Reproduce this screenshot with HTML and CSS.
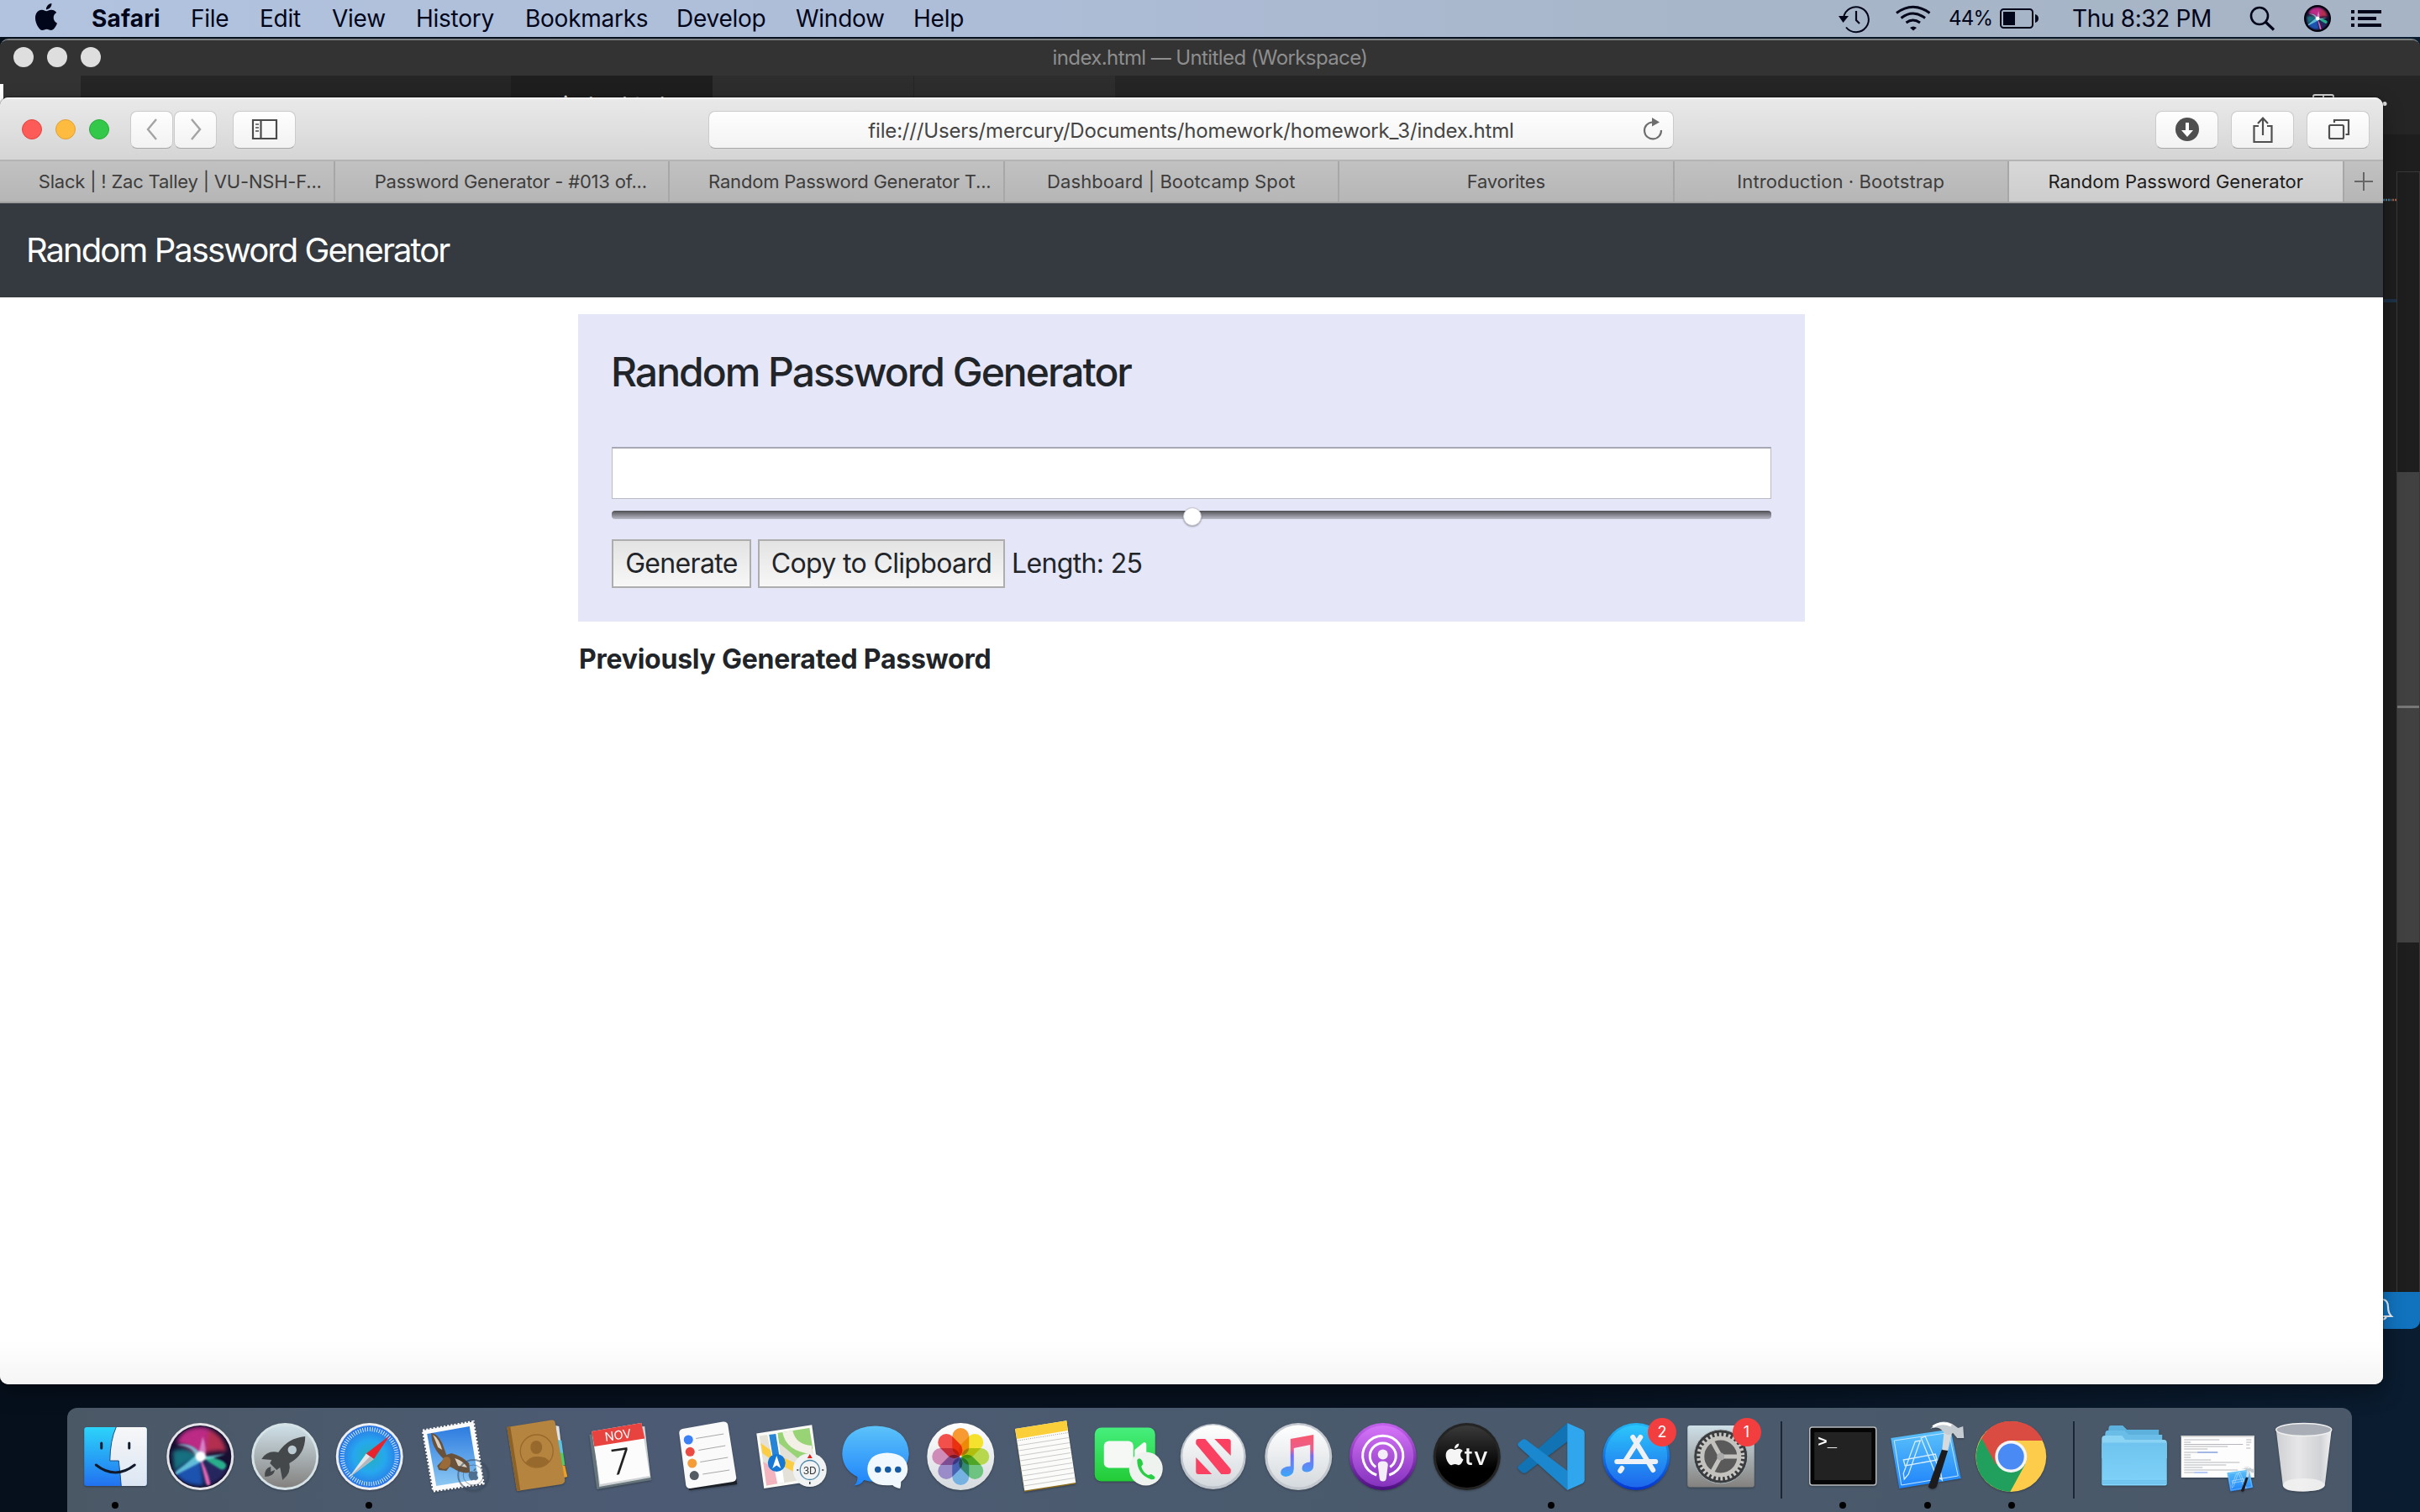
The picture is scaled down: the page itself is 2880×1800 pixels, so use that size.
FILE: index.html
```html
<!DOCTYPE html>
<html lang="en">
<head>
<meta charset="utf-8">
<title>Random Password Generator</title>
<link rel="stylesheet" href="styles.css">
</head>
<body>
<svg class="defs" width="0" height="0">
  <defs>
    <path id="apple" d="M12.152 6.896c-.948 0-2.415-1.078-3.96-1.04-2.04.027-3.91 1.183-4.961 3.014-2.117 3.675-.546 9.103 1.519 12.09 1.013 1.454 2.208 3.09 3.792 3.039 1.52-.065 2.09-.987 3.935-.987 1.831 0 2.35.987 3.96.948 1.637-.026 2.676-1.48 3.676-2.948 1.156-1.688 1.636-3.325 1.662-3.415-.039-.013-3.182-1.221-3.22-4.857-.026-3.04 2.48-4.494 2.597-4.559-1.429-2.09-3.623-2.324-4.39-2.376-2-.156-3.675 1.09-4.61 1.09zM15.53 3.83c.843-1.012 1.4-2.427 1.245-3.83-1.207.052-2.662.805-3.532 1.818-.78.896-1.454 2.338-1.273 3.714 1.338.104 2.715-.688 3.559-1.701"/>
    <linearGradient id="gWhite" x2="0" y2="1"><stop stop-color="#fff"/><stop offset="1" stop-color="#d5dade"/></linearGradient>
    <linearGradient id="gBlue" x2="0" y2="1"><stop stop-color="#5cc3fa"/><stop offset="1" stop-color="#1e83fa"/></linearGradient>
    <linearGradient id="gFinder" x2="0" y2="1"><stop stop-color="#2cd4fa"/><stop offset="1" stop-color="#2272f0"/></linearGradient>
    <linearGradient id="gFinderR" x2="0" y2="1"><stop stop-color="#f7f7f8"/><stop offset="1" stop-color="#dbe6f3"/></linearGradient>
    <linearGradient id="gSteel" x2="0" y2="1"><stop stop-color="#cfe0e8"/><stop offset="1" stop-color="#83817f"/></linearGradient>
    <radialGradient id="gSafari"><stop stop-color="#24b0b8"/><stop offset=".5" stop-color="#26a8ee"/><stop offset="1" stop-color="#2a73e6"/></radialGradient>
    <linearGradient id="gSky" x2="0" y2="1"><stop stop-color="#2c7be0"/><stop offset="1" stop-color="#8cc8f2"/></linearGradient>
    <linearGradient id="gGreen" x2="0" y2="1"><stop stop-color="#45ef7c"/><stop offset="1" stop-color="#22cb36"/></linearGradient>
    <linearGradient id="gPurple" x2="0" y2="1"><stop stop-color="#d574f8"/><stop offset="1" stop-color="#8432bd"/></linearGradient>
    <linearGradient id="gPurpleD" x2="0" y2="1"><stop stop-color="#c562ee"/><stop offset="1" stop-color="#4c1080"/></linearGradient>
    <linearGradient id="gBlack" x2="0" y2="1"><stop stop-color="#3a3a3a"/><stop offset=".7" stop-color="#000"/></linearGradient>
    <linearGradient id="gStore" x2="0" y2="1"><stop stop-color="#2bc6fb"/><stop offset="1" stop-color="#1e67ec"/></linearGradient>
    <linearGradient id="gStoreD" x2="0" y2="1"><stop stop-color="#22b5f5"/><stop offset="1" stop-color="#0734cc"/></linearGradient>
    <linearGradient id="gMusic" x2="0" y2="1"><stop stop-color="#f9586b"/><stop offset=".35" stop-color="#ea5f8f"/><stop offset=".5" stop-color="#7a6bf5"/><stop offset="1" stop-color="#3aa9f8"/></linearGradient>
    <linearGradient id="gFolder" x2="0" y2="1"><stop stop-color="#6ec4ee"/><stop offset="1" stop-color="#80d3fa"/></linearGradient>
    <linearGradient id="gTrash"><stop stop-color="#cfd0d3"/><stop offset=".4" stop-color="#e6e6e8"/><stop offset=".8" stop-color="#d2d3d6"/><stop offset="1" stop-color="#f1f1f2"/></linearGradient>
    <filter id="soft" x="-20%" y="-20%" width="140%" height="140%"><feGaussianBlur stdDeviation="2.500"/></filter>
    <filter id="soft1" x="-20%" y="-20%" width="140%" height="140%"><feGaussianBlur stdDeviation=".8"/></filter>
    <clipPath id="siriClip"><circle cx="50" cy="58" r="36"/></clipPath>
    <g id="siri">
      <circle cx="50" cy="58" r="37" fill="#150f30"/>
      <g clip-path="url(#siriClip)">
        <g filter="url(#soft)">
          <path d="M22 42Q28 22 54 23Q76 28 80 52Q66 46 50 58Q38 44 22 42z" fill="#bb2c85"/>
          <path d="M60 26Q78 32 81 52Q68 50 56 54z" fill="#b32e50"/>
          <path d="M17 52Q32 44 50 58Q30 66 19 76z" fill="#14707f"/>
          <path d="M20 78Q32 66 50 58L54 92Q32 94 20 78z" fill="#1a53b0"/>
          <path d="M52 60Q78 62 82 72Q76 88 58 92z" fill="#25285e"/>
        </g>
        <g filter="url(#soft1)">
          <path d="M50 57Q78 60 81 68Q80 75 74 73Q62 66 50 57z" fill="#2cc795" opacity=".85"/>
          <path d="M49 58Q58 72 62 90Q60 96 57 90Q53 74 49 58z" fill="#e666b4"/>
          <path d="M22 44Q42 40 53 58L80 55Q62 62 54 61L50 65L21 80Q19 78 22 75Q38 63 44 57Q42 46 22 44z" fill="#7deaf0" opacity=".7"/>
          <path d="M53 34Q50 48 46 60L56 62Q58 48 53 34z" fill="#dfa0dc" opacity=".75"/>
          <circle cx="50.500" cy="58" r="6" fill="#fff"/>
        </g>
      </g>
    </g>
    <g id="xcode">
      <path d="M6 36L77 25.500L89.500 84L16 96z" fill="url(#gBlue)"/>
      <path d="M10 39L75 29.500L86 81L18.500 92z" fill="none" stroke="#c5e6fd" stroke-width="1"/>
      <path d="M42 36l5-2 18 42 2 10-8-8zM35 40l6-1-14 40-5 6-1-7zM21 62l38-7 2 7-38 7z" fill="none" stroke="#d9effd" stroke-width="1.300"/>
      <path d="M67 49l7 1.500L60.500 94q-5 5-10 0z" fill="#1c1c1f"/>
      <path d="M70 22l10 1-6 28-7-1z" fill="#d4dade"/>
      <path d="M53 25Q64 12 79 19L86 24L92 22L93 36L85 36L80 30Q74 35 68 28Q62 21 53 25z" fill="#c4cbd1"/>
      <path d="M56 22.500Q66 16 78 21" stroke="#fff" stroke-width="3" fill="none"/>
    </g>
  </defs>
</svg>

<div class="desktop">
  <header class="menubar">
    <svg class="mb-apple" viewBox="0 0 24 24"><use href="#apple"/></svg>
    <nav class="menus">
      <b>Safari</b><span>File</span><span>Edit</span><span>View</span><span>History</span><span>Bookmarks</span><span>Develop</span><span>Window</span><span>Help</span>
    </nav>
    <svg class="mb-icons" viewBox="2180 0 140 44" width="140" height="44">
      <g fill="none" stroke="#02061a" stroke-width="2">
        <path d="M2194 21A15 15 0 1 1 2197 32.500"/>
        <path d="M2209 13V24L2213 28" stroke-width="2.200"/>
        <path d="M2257 15.500Q2276.500 1 2296.500 15.500M2262.500 21.500Q2276.500 10.500 2291 21.500M2268.500 27Q2276.500 21 2285 27" stroke-width="3"/>
      </g>
      <path d="M2188 19h12l-6.500 8zM2273 33q4-3 8 0l-4 3.500z" fill="#02061a"/>
    </svg>
    <span class="pct">44%</span>
    <svg class="mb-bat" viewBox="2378 0 60 44" width="60" height="44">
      <rect x="2381" y="11" width="38" height="22" rx="3.500" fill="none" stroke="#02061a" stroke-width="2"/>
      <path d="M2384 14h14v16h-14zM2422 17q4 1 4 5t-4 5z" fill="#02061a"/>
    </svg>
    <span class="clock">Thu 8:32 PM</span>
    <svg class="mb-right" viewBox="2670 0 210 44" width="210" height="44">
      <circle cx="2689" cy="19" r="10" fill="none" stroke="#02061a" stroke-width="2.600"/>
      <path d="M2696 26l10 9.500" stroke="#02061a" stroke-width="3.200"/>
      <circle cx="2758" cy="22" r="16" fill="#04030d"/>
      <g transform="translate(2739 0) scale(.38)"><use href="#siri"/></g>
      <path d="M2798 12h4v4h-4zM2806 12h28v4h-28zM2798 20h4v4h-4zM2806 20h22v4h-22zM2798 28h4v4h-4zM2806 28h28v4h-28z" fill="#02061a"/>
    </svg>
  </header>

  <section class="editor">
    <div class="editor-title">
      <div class="lights grey"><i></i><i></i><i></i></div>
      <span>index.html — Untitled (Workspace)</span>
    </div>
    <div class="editor-tabs"><i class="side"></i><i class="bar"></i><div class="on">index.html</div><i class="off"></i><i class="off"></i></div>
    <div class="editor-body">
      <i class="hl"></i>
      <div class="map"><i class="thumb"><i></i></i></div>
    </div>
    <div class="status">
      <svg width="30" height="44" viewBox="0 0 30 44"><path d="M-6 29H10Q6 25 6 18Q6 10 0 9M-4 31Q0 35 4 30" fill="none" stroke="#e8f1f8" stroke-width="2.200"/></svg>
    </div>
    <svg class="editor-bits" viewBox="2700 100 180 160" width="180" height="160">
      <path d="M2753 120v-5q0-2 2-2h20q2 0 2 2v5M2765 113v6" fill="none" stroke="#d0d0d0" stroke-width="2"/>
      <circle cx="2838" cy="123.500" r="2.500" fill="#e0e0e0"/>
      <path d="M2836 238h10" stroke="#4f7f96" stroke-width="2.500" stroke-dasharray="2 1"/>
      <path d="M2847 238h5" stroke="#a0604e" stroke-width="2.500" stroke-dasharray="2 1"/>
    </svg>
  </section>

  <section class="browser">
    <div class="toolbar">
      <div class="lights"><i class="r"></i><i class="y"></i><i class="g"></i></div>
      <div class="btn nav"><svg width="24" height="30" viewBox="0 0 24 30"><path d="M17 3L7 15L17 27" fill="none" stroke="#a3a3a3" stroke-width="2.400"/></svg></div>
      <div class="btn nav"><svg width="24" height="30" viewBox="0 0 24 30"><path d="M7 3L17 15L7 27" fill="none" stroke="#a3a3a3" stroke-width="2.400"/></svg></div>
      <div class="btn sidebar"><svg width="32" height="26" viewBox="0 0 32 26"><path d="M2 2h28v22h-28zM11.500 2v22" fill="none" stroke="#4a4a4a" stroke-width="2.200"/><path d="M5 7h4M5 11h4M5 15h4" stroke="#777" stroke-width="2"/></svg></div>
      <div class="url"><span>file:///Users/mercury/Documents/homework/homework_3/index.html</span>
        <svg width="28" height="30" viewBox="0 0 28 30"><path d="M13 6.500A10 10 0 1 0 24 16" fill="none" stroke="#6e6e6e" stroke-width="2.200"/><path d="M13 1l9 5.500-9 5z" fill="#6e6e6e"/></svg>
      </div>
      <div class="tools">
        <div class="btn"><svg width="30" height="30" viewBox="0 0 30 30"><circle cx="15" cy="15" r="14" fill="#4f4f4f"/><path d="M13 7h4v9h5l-7 8-7-8h5z" fill="#fff"/></svg></div>
        <div class="btn"><svg width="30" height="36" viewBox="0 0 30 36"><path d="M10 14H4.500V33H25.500V14H20M15 25V5M9 11L15 4.500L21 11" fill="none" stroke="#4f4f4f" stroke-width="2.200"/></svg></div>
        <div class="btn"><svg width="30" height="30" viewBox="0 0 30 30"><rect x="4" y="10" width="17" height="16" rx="1.500" fill="none" stroke="#4f4f4f" stroke-width="2.200"/><path d="M10 7V4H27V21H23.500" fill="none" stroke="#4f4f4f" stroke-width="2.200"/></svg></div>
      </div>
    </div>
    <div class="tabs">
      <div class="tab icon">Slack | ! Zac Talley | VU-NSH-F...</div>
      <div class="tab second">Password Generator - #013 of...</div>
      <div class="tab icon">Random Password Generator T...</div>
      <div class="tab wide">Dashboard | Bootcamp Spot</div>
      <div class="tab">Favorites</div>
      <div class="tab wide">Introduction · Bootstrap</div>
      <div class="tab active">Random Password Generator</div>
      <div class="plus"><svg width="24" height="24" viewBox="0 0 24 24"><path d="M1 12h22M12 1v22" stroke="#666" stroke-width="2"/></svg></div>
    </div>
    <div class="navbar">Random Password Generator</div>
    <main class="page">
      <div class="panel">
        <h2>Random Password Generator</h2>
        <div class="field"></div>
        <div class="slider"><i></i></div>
        <div class="actions">
          <span class="act gen">Generate</span><span class="act copy">Copy to Clipboard</span><span class="len">Length: 25</span>
        </div>
      </div>
      <div class="prev">Previously Generated Password</div>
    </main>
  </section>

  <footer class="dock">
    <div class="app run"><svg viewBox="0 0 100 124"><rect x="13" y="23" width="74.500" height="70" rx="3" fill="url(#gFinder)"/><path d="M51 23H84.500q3 0 3 3V90q0 3-3 3H57Q56 80 54 63H43.500Q44 38 51 23z" fill="url(#gFinderR)"/><path d="M51 23Q44 38 43.500 63H54Q56 80 57 93" fill="none" stroke="#1e4f80" stroke-width="1"/><path d="M33.500 42v6M66.500 42v6M27 68Q50 86 73 68" fill="none" stroke="#101a2a" stroke-width="3" stroke-linecap="round"/></svg></div>
    <div class="app"><svg viewBox="0 0 100 124"><circle cx="50" cy="58" r="40" fill="#e4e4e8"/><use href="#siri"/></svg></div>
    <div class="app"><svg viewBox="0 0 100 124"><circle cx="51" cy="58" r="40" fill="#d5e2e6"/><circle cx="51" cy="58" r="37" fill="url(#gSteel)"/><path d="M75 34Q54 36 43 53Q30 50 23 61L35 62L33 66L41 74L45 71L48 86Q59 77 56 66Q75 56 75 34z" fill="#45484b"/><path d="M34 70Q26 72 27 82Q37 82 39 74L34 76z" fill="#45484b"/><circle cx="59.500" cy="50" r="5.200" fill="#bccbd1"/></svg></div>
    <div class="app run"><svg viewBox="0 0 100 124"><circle cx="50.500" cy="58" r="40" fill="#eceef0"/><circle cx="50.500" cy="58" r="37" fill="url(#gSafari)"/><circle cx="50.500" cy="58" r="32.500" fill="none" stroke="#e6f4fb" stroke-width="5" stroke-dasharray=".9 1.935"/><path d="M74.500 33L46.500 54.500L55.500 61z" fill="#e8232c"/><path d="M46.500 54.500L26 83L55.500 61z" fill="#e3e6e8"/><path d="M51 58L26 83L55.500 61z" fill="#b3b8bd"/></svg></div>
    <div class="app"><svg viewBox="0 0 100 124"><path d="M14 27L74 16.500L86 90L26.500 99z" fill="#fbfbfb" stroke="#fbfbfb" stroke-width="3" stroke-dasharray="2.200 2"/><path d="M19 31L69.500 22L80 85L30 93z" fill="url(#gSky)"/><path d="M24 30Q31 30 37 42L42 56L48 54Q60 57 69 66L70 77Q60 79 50 72L46 70L42 75L33 74L31 69L39 61Q24 48 24 30z" fill="#6a523a"/><path d="M26 32Q33 36 37 50L32 47zM52 60Q62 63 67 71L56 69z" fill="#d9cfc0"/><path d="M39 59q8-3 8 5t-8 9l-6-2z" fill="#9a6b38"/><circle cx="74" cy="80" r="18" fill="none" stroke="#3d5068" stroke-width="2" opacity=".6"/><circle cx="74" cy="80" r="12" fill="none" stroke="#3d5068" stroke-width="1" opacity=".5"/><g transform="translate(67 72) scale(.6)" fill="#3d5068" opacity=".7"><use href="#apple"/></g></svg></div>
    <div class="app"><svg viewBox="0 0 100 124"><path d="M71 21l4 1 2 17-5 2z" fill="#dfe3e6"/><path d="M73 38l5 1 2 15-6 2z" fill="#5bc3e4"/><path d="M75 53l5 1 2 14-6 2z" fill="#4fce62"/><path d="M77 68l5 1 3 13-7 2z" fill="#f09f20"/><path d="M13 23L66 14.500Q70 14 70.500 18L82 86Q82 90 78 91L25 99z" fill="#b5843f"/><path d="M13 23L17 22L29 98L25 99z" fill="#8d6228"/><circle cx="48.500" cy="51.500" r="19.500" fill="#b5843f" stroke="#98692c" stroke-width="1.300"/><ellipse cx="48" cy="47" rx="7" ry="8" fill="#98692c"/><path d="M35 66Q40 57 50 58Q60 58 64 64Q52 76 35 66z" fill="#98692c"/></svg></div>
    <div class="app"><svg viewBox="0 0 100 124"><path d="M11 32L75 21L85 86L20 97z" fill="#66747c"/><path d="M16 29L77 22L84 83L23 94z" fill="#cfd3d6"/><path d="M14 28L73 18L83 81L24 91z" fill="#fcfcfc"/><path d="M14 28L73 18L77 36.500L17 46z" fill="#e8433f"/><g transform="rotate(-8 46 32)"><text x="45" y="37.500" font-size="14.500" fill="#fff" text-anchor="middle" font-family="Inter">NOV</text></g><g transform="rotate(-8 50 62)"><text x="48.500" y="78.500" font-size="42" font-weight="300" fill="#222" text-anchor="middle" font-family="Inter">7</text></g></svg></div>
    <div class="app"><svg viewBox="0 0 100 124"><path d="M19 30L74 20L86 91L29 98z" fill="#1c2127"/><path d="M17 30Q17 26 21 25L69 16.500Q74 16 75 20L85 83Q85 87 81 88L30 96Q26 96 25 92z" fill="#fafafa"/><path d="M37 36.500L70 31M40 50.500L72 45M42 64.500L75 59M45 79L77 74" stroke="#a8a8a8" stroke-width="1"/><circle cx="28" cy="38" r="5.500" fill="#3b80f6"/><circle cx="30" cy="52.300" r="5.500" fill="#ea4a41"/><circle cx="32.500" cy="66" r="5.500" fill="#f39c38"/><circle cx="35" cy="80.600" r="5.500" fill="#545b62"/></svg></div>
    <div class="app"><svg viewBox="0 0 100 124"><path d="M9 30.600L75 20.300L84 86L18 96z" fill="#fafaf7"/><path d="M12.500 33.500L72 24L80.500 83L21 92.500z" fill="#e4e1d8"/><path d="M34 30L72 24L76 48Q70 58 58 60L36 42z" fill="#98d475"/><path d="M40 29Q44 52 75 55L75 45Q56 44 52 27z" fill="#f3f0e8"/><path d="M14 42L34 56L60 68L57 78L30 64L16 54z" fill="#fbcd45"/><path d="M17 64L30 72L34 90L21 92.500z" fill="#f3b3bf"/><path d="M22 32L34 30L42 89L34 90z" fill="#fff"/><path d="M24 32L32 31L36 56L28 56z" fill="#2785d6"/><circle cx="33" cy="65.500" r="10.500" fill="#1478d4"/><path d="M33 57l5 15-5-3.500-5 3.500z" fill="#fff"/><circle cx="72.500" cy="74" r="20" fill="#f0f2f3"/><circle cx="72.500" cy="74" r="11.500" fill="none" stroke="#4b87a5" stroke-width="1.300"/><path d="M72.500 55l3 5h-6z" fill="#e32119"/><path d="M57 74h2M87 74h2M72.500 88v3" stroke="#333" stroke-width="1.500"/><text x="72.500" y="78.500" font-size="12" fill="#333" text-anchor="middle" font-family="Inter">3D</text></svg></div>
    <div class="app"><svg viewBox="0 0 100 124"><path d="M10 55Q11 23 49.500 21.600Q88 23 89.500 55Q87 86 49.500 88Q42 88 36 86Q32 92 24 92.500Q29 88 28 82Q11 74 10 55z" fill="url(#gBlue)"/><path d="M40 73Q41 54 63.500 53.500Q87 54 88 73Q88 82 80 88Q80 93 79 96Q73 95 70 92Q41 95 40 73z" fill="#f1f8fe"/><g fill="#165ba6"><circle cx="52.500" cy="73.500" r="3.800"/><circle cx="64.500" cy="73.500" r="3.800"/><circle cx="76.500" cy="73.500" r="3.800"/></g></svg></div>
    <div class="app"><svg viewBox="0 0 100 124"><circle cx="51" cy="58" r="40" fill="url(#gWhite)"/><g class="petals" transform="translate(51 58)"><rect x="-10" y="-34" width="20" height="33" rx="10" fill="#f79a31"/><rect x="-10" y="-34" width="20" height="33" rx="10" fill="#f5e22e" transform="rotate(45)"/><rect x="-10" y="-34" width="20" height="33" rx="10" fill="#b7d84d" transform="rotate(90)"/><rect x="-10" y="-34" width="20" height="33" rx="10" fill="#6ec380" transform="rotate(135)"/><rect x="-10" y="-34" width="20" height="33" rx="10" fill="#75b2e2" transform="rotate(180)"/><rect x="-10" y="-34" width="20" height="33" rx="10" fill="#9a8cc9" transform="rotate(225)"/><rect x="-10" y="-34" width="20" height="33" rx="10" fill="#cf8cb9" transform="rotate(270)"/><rect x="-10" y="-34" width="20" height="33" rx="10" fill="#f2514b" transform="rotate(315)"/></g></svg></div>
    <div class="app"><svg viewBox="0 0 100 124"><path d="M15 27L76 17L87 90.500L26 100z" fill="#8c6b1c"/><path d="M14.800 25L76 15.300L87 89L26 98.500z" fill="#fbfbfa"/><path d="M14.800 25L76 15.300L77.500 27L17 37z" fill="#fbcf3a"/><path d="M18 39L78 29.500" stroke="#999" stroke-dasharray="1 1.500"/><path d="M18 45L78.500 35.500M19 51L79.500 41.500M20 57L80.500 47.500M21 63L81 53.500M21.500 69L82 59.500M22.500 75L83 65.500M23.500 81L84 71.500M24 87L84.500 77.500M25 93L85.500 83.500" stroke="#cacaca" stroke-width="1"/></svg></div>
    <div class="app"><svg viewBox="0 0 100 124"><rect x="9.500" y="23.500" width="72" height="64" rx="8" fill="url(#gGreen)"/><rect x="20.500" y="39.500" width="35" height="32" rx="6" fill="#f6f8f6"/><path d="M57 50L68 41Q71 41 71 44V70L57 60z" fill="#f6f8f6"/><circle cx="70.500" cy="72.500" r="20" fill="#eff3ef"/><path d="M60 62Q63 58 66 63L67 67L65 70Q67 77 73 80L77 79L81 82Q82 86 76 85Q60 79 60 62z" fill="#28cf45"/></svg></div>
    <div class="app"><svg viewBox="0 0 100 124"><circle cx="49.500" cy="58" r="39" fill="#bcc3cb"/><circle cx="49.500" cy="57" r="36.500" fill="url(#gWhite)"/><path d="M29 40Q29 37 32 37H40L70.500 73V76Q70.500 79 67 79H59L29 43zM51 37H67Q70.500 37 70.500 40V57zM29 59L48 79H32Q29 79 29 76z" fill="#fb4161"/></svg></div>
    <div class="app"><svg viewBox="0 0 100 124"><circle cx="51" cy="58" r="40" fill="#c3c8cf"/><circle cx="51" cy="57.500" r="37" fill="url(#gWhite)"/><path d="M41.500 37L69 32V68Q69 76 61 76.500Q54 76 55.500 70Q57 65 65 64.500V44L45.500 48V73Q45 81 36 82Q29 81 30 76Q31 70 41.500 69.500z" fill="url(#gMusic)"/></svg></div>
    <div class="app"><svg viewBox="0 0 100 124"><circle cx="50.500" cy="58" r="40" fill="url(#gPurpleD)"/><circle cx="50.500" cy="57.500" r="36.500" fill="url(#gPurple)"/><g fill="none" stroke="#fff" stroke-width="3"><path d="M43 80A24 24 0 1 1 58 80"/><path d="M42 70.500A15.500 15.500 0 1 1 59 70.500"/></g><circle cx="50.500" cy="55.500" r="6" fill="#f4eef8"/><path d="M44.500 68Q44.500 63.500 50.500 63.500T56.500 68L54.500 84Q54 87.500 50.500 87.500T46.500 84z" fill="#f4eef8"/></svg></div>
    <div class="app"><svg viewBox="0 0 100 124"><circle cx="50.500" cy="58" r="40" fill="#242424"/><circle cx="50.500" cy="58" r="37" fill="url(#gBlack)"/><g transform="translate(23 42.500) scale(1.070)" fill="#f5f5f5"><use href="#apple"/></g><text x="47.500" y="68" font-size="29" font-weight="500" fill="#f5f5f5" textLength="28" font-family="Inter">tv</text></svg></div>
    <div class="app run"><svg viewBox="0 0 100 124"><path d="M69 18V40L20 77Q17 79 14 76L10.500 73Q9 71 11 69z" fill="#1173b4"/><path d="M69 98V75L20 38Q17 36 14 39L10.500 42Q9 44 11 46z" fill="#1a87cf"/><path d="M69 18L87 26Q89.500 27.500 89.500 30V86Q89.500 88.500 87 90L69 98z" fill="#2fa6ee"/></svg></div>
    <div class="app"><svg viewBox="0 0 100 124"><circle cx="51" cy="58" r="40" fill="url(#gStoreD)"/><circle cx="51" cy="57.500" r="37" fill="url(#gStore)"/><g stroke="#eef1f6" stroke-width="6" stroke-linecap="round"><path d="M28 64H74M56 35L38 63M47 35L71 74M34 72L32 75"/></g></svg><span class="badge">2</span></div>
    <div class="app"><svg viewBox="0 0 100 124"><rect x="11" y="21" width="79.500" height="73.500" rx="3" fill="url(#gSteel)"/><circle cx="50.500" cy="58" r="32" fill="#3a3c3e" stroke="#a8b4ba"/><circle cx="50.500" cy="58" r="26" fill="none" stroke="#c8c8c6" stroke-width="5" stroke-dasharray="2.800 2.645"/><circle cx="50.500" cy="58" r="22" fill="#5a5a5a" stroke="#c4c2be" stroke-width="5"/><path d="M50.500 58H72M50.500 58L40 39M50.500 58L40 77" stroke="#c4c2be" stroke-width="5"/><circle cx="50.500" cy="58" r="4.500" fill="#aaa"/></svg><span class="badge">1</span></div>
    <div class="sep"></div>
    <div class="app run"><svg viewBox="0 0 100 124"><rect x="10.500" y="23" width="79" height="69" rx="3" fill="#050505" stroke="#b9bcbe" stroke-width="1.500"/><rect x="16" y="29" width="68" height="57" fill="#222"/><text x="20" y="46" font-size="19" font-weight="700" fill="#fff" font-family="Liberation Mono">&gt;_</text></svg></div>
    <div class="app run"><svg viewBox="0 0 100 124"><use href="#xcode"/></svg></div>
    <div class="app run"><svg viewBox="0 0 100 124"><circle cx="49" cy="58" r="42" fill="#fccc4a"/><path d="M49 58L49 39H87Q76 16 49 16Q26 16 14 37L31 68z" fill="#da4c41"/><path d="M14 36Q2 56 12 78Q24 98 48 100L66 67L31 67z" fill="#21a05d"/><path d="M49 16Q26 16 14 36L31 67L49 58z" fill="#da4c41"/><circle cx="49" cy="58" r="19" fill="#f4f4f4"/><circle cx="49" cy="58" r="15.500" fill="#4a8af5"/></svg></div>
    <div class="sep"></div>
    <div class="app"><svg viewBox="0 0 100 124"><path d="M18 26Q18 21 21 21H35L40 26H78V60H18z" fill="#5cb2dd"/><path d="M14 32Q14 27 17 27H37L42 32H82V60H14z" fill="#69bde6"/><path d="M10 37Q10 33 14 33H34L38 38H84Q87.500 38 87.500 42V60H10z" fill="#8bd3f5"/><rect x="10" y="41.500" width="77.500" height="51" rx="2" fill="url(#gFolder)"/><path d="M10 87H87.500M10 89.500H87.500" stroke="#5fb4e0" stroke-width="1"/></svg></div>
    <div class="app"><svg viewBox="0 0 100 124"><rect x="4.500" y="33" width="87" height="50" fill="#fdfdfd"/><path d="M4.500 34H91" stroke="#d5d5d5" stroke-width="2"/><path d="M8 38H50M8 41H16M8 43.500H78M8 46H60M8 49H36M8 53H48M8 56H16M8 59H16M8 62H40M8 65H74M8 68H58M8 71H30M8 74H72M8 77H20M82 38H88M82 41H88M82 44H86M82 48H87" stroke="#b5b7ba" stroke-width="1"/><path d="M24 53H48M20 77H36" stroke="#6f95ee" stroke-width="1"/><g transform="translate(57 64) scale(.37)"><use href="#xcode"/></g></svg></div>
    <div class="app"><svg viewBox="0 0 100 124"><path d="M16.500 26L24.500 92Q26 99 49 99.500Q73 99 74.500 92L82.500 26z" fill="url(#gTrash)"/><path d="M24.500 92Q26 84 49 84T74.500 92Q73 99 49 99.500T24.500 92z" fill="#f3f3f3" opacity=".8"/><ellipse cx="49.500" cy="26" rx="33" ry="7.500" fill="#a9aeb6" stroke="#f0f0f0" stroke-width="1.500"/></svg></div>
  </footer>
</div>
</body>
</html>
```
FILE: styles.css
```css
* { box-sizing: border-box; }
body { margin: 0; font-family: Inter, "Liberation Sans", sans-serif; }
.defs { position: absolute; }
i { display: block; font-style: normal; }
svg { display: block; flex: none; }

.desktop {
  position: relative; width: 2880px; height: 1800px; overflow: hidden;
  background: linear-gradient(90deg, #06101d, #07111f 60%, #0a1c30);
}

/* menu bar */
.menubar {
  position: relative; display: flex; align-items: center; height: 44px;
  font-size: 28px; line-height: 44px; color: #02061a; letter-spacing: -.25px; white-space: nowrap;
  background: linear-gradient(90deg, #b2c3df, #adbdd7 42%, #a8b6c9 70%, #a6b4c6);
}
.mb-apple { width: 32px; height: 32px; margin: -4px 0 0 39px; fill: #02061a; }
.menus { display: grid; grid-template-columns: 118px 82px 86px 100px 130px 180px 142px 140px 70px; margin-left: 38px; }
.menus b { letter-spacing: .2px; }
.mb-icons { margin-left: 1023px; }
.pct { width: 58px; font-size: 24px; letter-spacing: -.7px; margin-left: -1px; line-height: 44px; }
.mb-bat { margin-left: 1px; }
.clock { width: 204px; margin-left: 28px; letter-spacing: -.350px; }

/* editor window behind */
.editor {
  position: absolute; left: 0; top: 46px; width: 2880px; height: 1536px; display: flex; flex-direction: column;
  background: #1e1e1e; border-radius: 10px; border-top: 2px solid #7b7f80; overflow: hidden;
}
.editor-title { position: relative; flex: none; height: 42px; padding-bottom: 2px; background: #333; display: flex; align-items: center; justify-content: center; }
.editor-title span { font-size: 24px; letter-spacing: -.6px; color: #8e8e8e; }
.lights { display: flex; gap: 16px; }
.lights i { width: 24px; height: 24px; border-radius: 50%; }
.lights.grey { position: absolute; left: 16px; top: 8px; }
.grey i { background: #dedede; }
.editor-tabs { flex: none; display: flex; height: 70px; background: #252526; }
.side { width: 96px; background: linear-gradient(#fff, #fff) 0 10px / 4px 60px no-repeat #333; }
.bar { width: 512px; }
.on { width: 240px; padding-left: 62px; font-size: 26px; line-height: 70px; letter-spacing: -.6px; color: #fff; background: #1e1e1e; }
.off { width: 240px; background: #2d2d2d; border-right: 1px solid #252526; }
.editor-body { flex: 1; display: flex; justify-content: flex-end; align-items: stretch; padding-top: 44px; }
.hl { width: 16px; height: 4px; margin-top: 152px; background: #1d3247; }
.map { width: 28px; border: 1px solid #383838; border-bottom: 0; padding-top: 357px; }
.thumb { height: 560px; background: #414141; padding-top: 278px; }
.thumb i { height: 3px; background: #777; }
.status { flex: none; height: 44px; background: #1173be; display: flex; justify-content: flex-end; padding-right: 14px; }
.editor-bits { position: absolute; right: 0; top: 52px; }

/* browser window */
.browser {
  position: absolute; left: 0; top: 116px; width: 2836px; height: 1532px; display: flex; flex-direction: column;
  background: #fff; border-radius: 10px; overflow: hidden;
  box-shadow: 0 0 2px #000, 0 10px 24px rgba(0, 0, 0, .35);
}
.toolbar {
  flex: none; height: 76px; display: flex; align-items: center; padding-left: 26px;
  background: linear-gradient(#e9e9e9, #d5d5d5); border-top: 2px solid #f6f6f6; border-bottom: 2px solid #b4b4b4;
}
.toolbar .r { background: #fc5b57; border: 1px solid #e2443f; }
.toolbar .y { background: #fdbc40; border: 1px solid #e0a033; }
.toolbar .g { background: #34c84a; border: 1px solid #24ab35; }
.btn {
  width: 75px; height: 45px; display: flex; align-items: center; justify-content: center;
  background: linear-gradient(#fefefe, #f2f2f2); border: 1px solid #cbcbcb; border-bottom-color: #a8a8a8; border-radius: 8px;
}
.btn.nav { width: 51px; margin-right: 1px; }
.lights + .btn.nav { margin-left: 25px; }
.btn.sidebar { margin-left: 18px; }
.url {
  width: 1149px; height: 45px; margin: 0 0 0 491px; padding-right: 10px; display: flex; align-items: center;
  background: linear-gradient(#fefefe, #f3f3f3); border: 1px solid #cbcbcb; border-bottom-color: #a8a8a8; border-radius: 8px;
}
.url span { flex: 1; padding: 2px 0 0 38px; text-align: center; font-size: 24px; letter-spacing: -.18px; color: #454545; white-space: nowrap; }
.tools { display: flex; gap: 15px; margin-left: 573px; }
.tabs { flex: none; display: flex; height: 50px; background: linear-gradient(#c1c1c1, #b6b6b6); border-bottom: 2px solid #a0a0a0; }
.tab {
  width: 398.500px; text-align: center; font-size: 22px; line-height: 48px; letter-spacing: -.2px; color: #3d3d3d;
  white-space: nowrap; border-right: 2px solid #a7a7a7;
}
.tab.icon { padding-left: 32px; }
.tab.second { padding-left: 22px; }
.tab.wide { letter-spacing: .1px; }
.tab.active { letter-spacing: 0; color: #1c1c1c; background: linear-gradient(#d8d8d8, #cdcdcd); }
.plus { flex: 1; display: flex; align-items: center; justify-content: center; }
.navbar { flex: none; height: 112px; padding-left: 31px; line-height: 112px; font-size: 40px; letter-spacing: -1.950px; color: #fff; background: #343a40; }

/* page content */
.page {
  flex: 1; padding: 20px 688px 0; color: #212529;
  background: linear-gradient(#fff 96%, #f5f5f5);
}
.panel { height: 366px; padding: 40px; background: #e5e6f8; }
.panel h2 { margin: 0 0 60px -1px; font-size: 48px; line-height: 58px; font-weight: 500; letter-spacing: -2px; }
.field { height: 62px; background: #fff; border: 1px solid #b9bbc8; border-top: 2px solid #a7a8b6; }
.slider { position: relative; height: 10px; margin-top: 14px; border-radius: 4px; background: linear-gradient(#4e4f53, #7b7b84 40%, #b9bac9); }
.slider i { position: absolute; left: 680px; top: -4px; width: 22px; height: 22px; border-radius: 50%; background: #fff; border: 1px solid #c8c8d2; box-shadow: 0 1px 2px rgba(0, 0, 0, .35); }
.actions { display: flex; margin-top: 24px; font-size: 32px; line-height: 54px; letter-spacing: -.650px; white-space: nowrap; }
.act { height: 58px; text-align: center; border: 2px solid #adadad; background: linear-gradient(#e3e3e3, #f7f7f7); }
.gen { width: 166px; }
.copy { width: 294px; margin: 0 8px 0 8px; }
.len { line-height: 58px; }
.prev { margin: 25px 0 0 1px; font-size: 32px; line-height: 40px; font-weight: 700; letter-spacing: -.250px; }

/* dock */
.dock {
  position: absolute; left: 80px; top: 1676px; width: 2719px; height: 124px; padding-left: 7px; display: flex;
  background: linear-gradient(90deg, #4a5866, #4c5b73 25%, #4a5a6c 60%, #4a5869); border-radius: 12px 12px 0 0;
}
.app { position: relative; width: 100.500px; height: 124px; flex: none; }
.app svg { width: 100.500px; height: 124px; filter: drop-shadow(0 1px 1px rgba(0, 0, 0, .3)); }
.run::after { content: ""; position: absolute; left: 46px; top: 112px; width: 8px; height: 8px; border-radius: 50%; background: #000; }
.petals { isolation: isolate; }
.petals rect { mix-blend-mode: multiply; }
.badge {
  position: absolute; left: 65px; top: 12px; width: 34px; height: 34px; border-radius: 50%; background: #f23e3e;
  color: #fff; font-size: 18px; line-height: 34px; text-align: center;
}
.sep { flex: none; width: 46px; height: 92px; margin-top: 16px; background: linear-gradient(#1b2636, #1b2636) center / 2px 100% no-repeat; }
```
